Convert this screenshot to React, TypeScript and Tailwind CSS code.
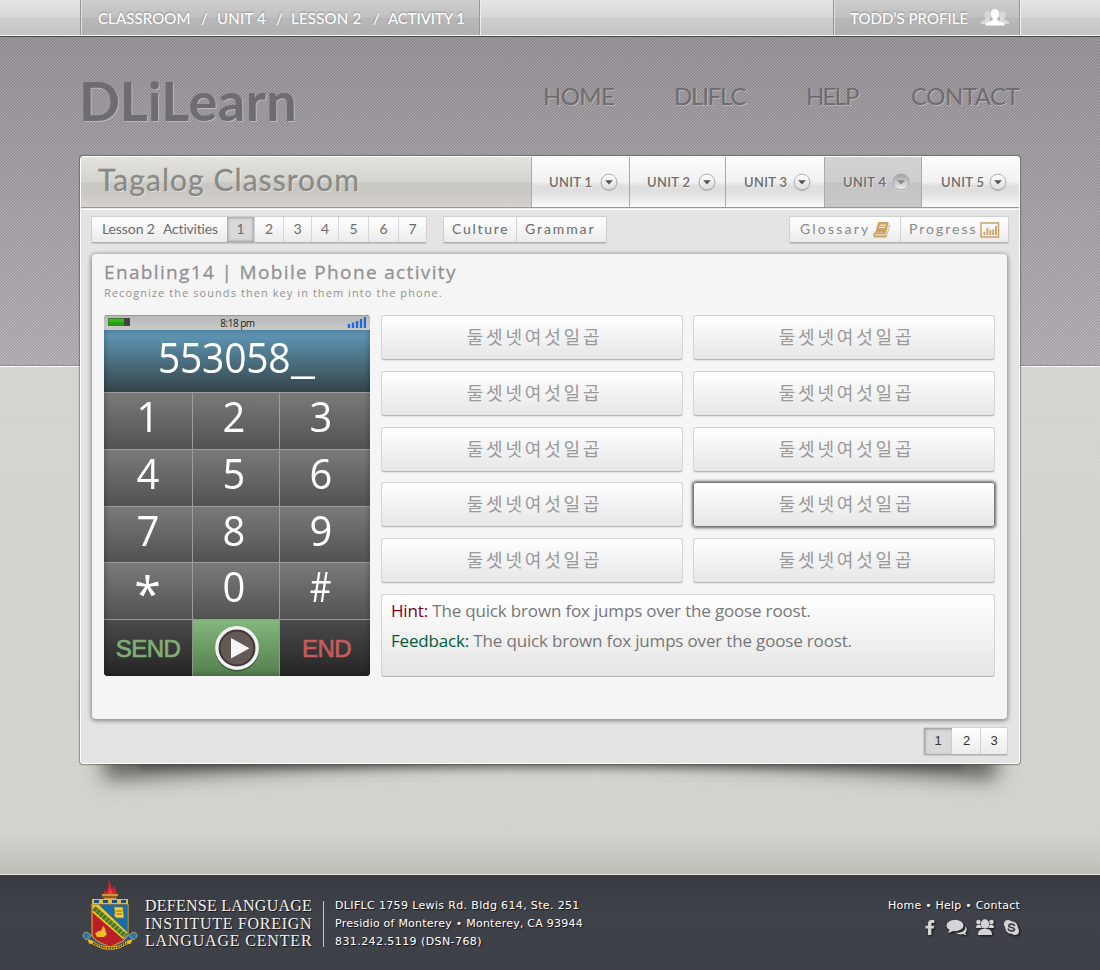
import React from "react";

const futura = "font-['Lato','Liberation_Sans',sans-serif]";
const myriad = "font-['Open_Sans','Noto_Sans',sans-serif]";

const units = [
  { label: "UNIT 1", cell: "w-[98px] pl-[17px]", arrow: "ml-[7px]" },
  { label: "UNIT 2", cell: "w-[96px] pl-[17px]", arrow: "ml-[7px]" },
  { label: "UNIT 3", cell: "w-[99px] pl-[18px]", arrow: "ml-[5px]" },
  { label: "UNIT 4", cell: "w-[97px] pl-[18px]", arrow: "ml-[5px]", active: true },
  { label: "UNIT 5", cell: "w-[98px] pl-[19px]", arrow: "ml-[4px]" },
];

const activities = [
  { n: "2", w: "w-[29px]" },
  { n: "3", w: "w-[28px]" },
  { n: "4", w: "w-[27px]" },
  { n: "5", w: "w-[30px]" },
  { n: "6", w: "w-[30px]" },
  { n: "7", w: "w-[28px]" },
];

const keys = ["1", "2", "3", "4", "5", "6", "7", "8", "9", "*", "0", "#"];

function TopBar() {
  return (
    <div className="h-[37px] border-b border-[#4a484a] bg-[linear-gradient(#e4e4e4_0px,#d8d8d8_17px,#cdcdcd_18px,#c6c6c6_35px,#f4f4f4_35px)]">
      <div className={`mx-[80px] flex h-[35px] justify-between ${futura} text-[15px] font-medium text-white [text-shadow:0_-1px_2px_rgba(0,0,0,0.28)]`}>
        <div className="flex w-[400px] items-center border-x border-[#969696] bg-black/10 pl-[17px] pt-[2px] whitespace-nowrap shadow-[inset_1px_0_0_#ddd,1px_0_0_#eee]">
          <span className="w-[103px] tracking-[0.1px]">CLASSROOM</span>
          <span className="w-[16px]">/</span>
          <span className="w-[59px] tracking-[0.2px]">UNIT 4</span>
          <span className="w-[15px]">/</span>
          <span className="w-[82px] tracking-[0.2px]">LESSON 2</span>
          <span className="w-[15px]">/</span>
          <span className="tracking-[-0.1px]">ACTIVITY 1</span>
        </div>
        <div className="flex w-[187px] items-center border-x border-[#969696] bg-black/10 pl-[16px] pt-[2px] whitespace-nowrap shadow-[inset_1px_0_0_#ddd,1px_0_0_#eee]">
          <span className="w-[130px] tracking-[0px]">TODD’S PROFILE</span>
          <svg className="-mt-[2px] h-[20px] w-[30px]" viewBox="0 0 30 20">
            <g fill="#d9d9d9">
              <ellipse cx="7.5" cy="7" rx="3" ry="4" />
              <path d="M1 16v-2c2-2 5-2 5-4h4v6z" />
              <ellipse cx="22.500" cy="7" rx="3" ry="4" />
              <path d="M29 16v-2c-2-2-5-2-5-4h-4v6z" />
            </g>
            <path fill="#fff" d="M15 1c2.800 0 4.400 2 4.200 5-.1 2-.9 3.600-1.900 4.600v1.500c1.700 1.500 6 2 7.300 4v1.400H5.400v-1.400c1.300-2 5.600-2.500 7.300-4v-1.500c-1-1-1.800-2.600-1.900-4.600C10.600 3 12.200 1 15 1z" />
          </svg>
        </div>
      </div>
    </div>
  );
}

function Masthead() {
  return (
    <div className={`mx-[80px] flex h-[119px] justify-between ${futura} text-[#6f6c6f] [text-shadow:1px_1px_0_rgba(255,255,255,0.3)]`}>
      <div className="-ml-px pt-[31px] text-[54px] leading-[66px] whitespace-nowrap">
        <span className="font-bold tracking-[-0.2px]">DLi</span>
        <span className="font-bold tracking-[0.5px]">Learn</span>
      </div>
      <nav className="flex pt-[44px] text-[24px] leading-[30px] whitespace-nowrap">
        <span className="w-[131px] tracking-[-0.6px]">HOME</span>
        <span className="w-[132px] tracking-[-1.200px]">DLIFLC</span>
        <span className="w-[105px] tracking-[-1.800px]">HELP</span>
        <span className="w-[109px] tracking-[-0.5px]">CONTACT</span>
      </nav>
    </div>
  );
}

function Arrow({ active }: { active?: boolean }) {
  return (
    <svg className="h-[20px] w-[20px] shrink-0" viewBox="0 0 20 20">
      <defs>
        <linearGradient id="knob" x1="0" y1="0" x2="0" y2="1">
          <stop offset="0" stopColor="#fff" />
          <stop offset="1" stopColor="#dcdcdc" />
        </linearGradient>
        <linearGradient id="knobOn" x1="0" y1="0" x2="0" y2="1">
          <stop offset="0" stopColor="#a2a2a2" />
          <stop offset="1" stopColor="#f0f0f0" />
        </linearGradient>
      </defs>
      <circle cx="10" cy="11" r="8.300" fill={active ? "#eee" : "#aaa"} opacity="0.6" />
      <circle cx="10" cy="10" r="7.900" fill={active ? "url(#knobOn)" : "url(#knob)"} stroke={active ? "#a2a2a2" : "#b0b0b0"} strokeWidth="1" />
      <path d="M6.200 8.200h7.600L10 12.400z" fill={active ? "#868686" : "#555"} />
    </svg>
  );
}

function TitleRow() {
  return (
    <div className="flex h-[50px]">
      <h1 className={`w-[450px] pl-[17px] pt-[3px] ${futura} text-[30px] leading-[39px] tracking-[1.050px] whitespace-nowrap text-[#8b8a86] bg-[linear-gradient(#e4e3df_0px,#d3d2cd_25px,#c8c7c1_26px,#cbc9c4_38px,#d6d3cf_50px)] [-webkit-text-stroke:0.3px_#8b8a86] [text-shadow:1px_1px_0_rgba(255,255,255,0.5)]`}>
        Tagalog Classroom
      </h1>
      {units.map((u) => (
        <div
          key={u.label}
          className={`flex items-center border-l border-[#a9a9a9] ${u.cell} ${
            u.active
              ? "bg-[linear-gradient(#d3d3d3_0px,#cdcdcd_25px,#c4c4c4_26px,#c8c8c8_50px)]"
              : "bg-[linear-gradient(#fcfcfc_0px,#f1f1f1_25px,#dedede_29px,#e0e0e0_36px,#fafafa_50px)]"
          }`}
        >
          <span className={`w-[43px] shrink-0 pt-[2px] ${futura} text-[13px] font-semibold tracking-[0.3px] whitespace-nowrap text-[#6d6d6d] [text-shadow:1px_1px_0_#fff8]`}>{u.label}</span>
          <span className={u.arrow}>
            <Arrow active={u.active} />
          </span>
        </div>
      ))}
    </div>
  );
}

const group = "flex rounded-[2px] border border-[#d0d0d0] border-b-[#aeaeae] bg-[linear-gradient(#ffffff,#ebebeb)] shadow-[0_1px_1px_rgba(0,0,0,0.12)] overflow-hidden whitespace-nowrap";

function Toolbar() {
  return (
    <div className={`flex px-[10px] pt-[6px] ${futura} text-[14px] leading-[24px] text-[#6c6c6c]`}>
      <div className={`${group} h-[27px] w-[336px]`}>
        <span className="w-[62px] pl-[10px] tracking-[-0.1px]">Lesson 2</span>
        <span className="w-[73px] pl-[9px] tracking-[-0.2px]">Activities</span>
        <span className="w-[27px] bg-[#d9d9d9] text-center shadow-[inset_0_0_3px_1px_rgba(0,0,0,0.28)]">1</span>
        {activities.map((a) => (
          <span key={a.n} className={`${a.w} border-l border-[#d6d6d6] text-center`}>{a.n}</span>
        ))}
      </div>
      <div className={`${group} ml-[16px] h-[27px] w-[164px]`}>
        <span className="w-[72px] pl-[8px] tracking-[1.700px]">Culture</span>
        <span className="flex-1 border-l border-[#d2d2d2] pl-[8px] tracking-[1.900px]">Grammar</span>
      </div>
      <div className={`${group} ml-auto h-[27px] w-[220px] text-[#8a8a8a]`}>
        <span className="flex w-[110px] pl-[10px] tracking-[2.200px]">
          <span className="w-[73px]">Glossary</span>
          <svg className="mt-[4px] h-[18px] w-[18px]" viewBox="0 0 18 18">
            <path fill="#caa367" d="M5.800 1h8.800c.8 0 1.100.5.900 1.200L13 11.200H2.300L4.900 1.900c.2-.6.400-.9.900-.9z" />
            <path d="M6.800 4.200h6.200M6.100 6.400h6.200" stroke="#fff" strokeWidth="1" />
            <path fill="#caa367" d="M2 11.200h11.200l2.500-7.500 1.600.4-3.500 11.300c-.2.700-.7 1.100-1.400 1.100H2.200C.6 16.500-.1 15 .3 13.200c.3-1.200.9-2 1.700-2z" />
            <path d="M2.200 13.900h11l3-9.600" fill="none" stroke="#f7f3ea" strokeWidth="0.900" />
          </svg>
        </span>
        <span className="flex flex-1 border-l border-[#d2d2d2] pl-[8px] tracking-[2px]">
          <span className="w-[71px]">Progress</span>
          <svg className="mt-[5px] h-[16px] w-[20px]" viewBox="0 0 20 16">
            <rect x="1" y="1" width="17.500" height="14" fill="none" stroke="#caa367" strokeWidth="1.500" />
            <path d="M4.300 13v-3M7.400 13V6M10.400 13V8M13.200 13V7.500M15.900 13V4" stroke="#caa367" strokeWidth="1.800" />
          </svg>
        </span>
      </div>
    </div>
  );
}

function Phone() {
  return (
    <div className="relative h-[361px] w-[266px] overflow-hidden rounded-[4px] bg-[#222]">
      <div className="flex h-[15px] items-center justify-between border-t border-[#999] bg-[linear-gradient(#b8b8b8,#cbcbcb)] pr-[4px] pl-[4px]">
        <svg className="-mt-[2px] h-[8px] w-[22px]" viewBox="0 0 22 8">
          <rect width="22" height="8" fill="#444" />
          <rect x="0.500" y="0.500" width="15.500" height="7" fill="#35b820" />
          <rect x="0.500" y="4" width="15.500" height="3.500" fill="#27a013" />
        </svg>
        <span className={`mr-[2px] ${myriad} text-[10px] tracking-[-0.5px] text-[#222]`}>8:18 pm</span>
        <svg className="-mt-[2px] h-[12px] w-[19px]" viewBox="0 0 19 12">
          <path d="M2 12V8M6 12V6.500M10 12V5M14 12V3M18 12V1" stroke="#2068d8" strokeWidth="2.400" />
        </svg>
      </div>
      <div className={`flex h-[62px] bg-[linear-gradient(#619bbb,#476776_60%,#334249)] pl-[54px] ${myriad} text-[42px] leading-[54px] whitespace-nowrap text-white`}>
        <span className="w-[133px] origin-left scale-x-[0.930] tracking-[-0.3px]">553058</span>
        <span className="origin-left scale-x-[1.300]">_</span>
      </div>
      <div className={`grid grid-cols-[88px_87px_91px] grid-rows-[57px_57px_56px_57px] ${myriad} text-[42px] text-white`}>
        {keys.map((k, i) => (
          <div
            key={k}
            className={`border-t border-[#9d9d9d] bg-[linear-gradient(#7a7a7a,#525252)] text-center leading-[46px] ${
              i % 3 === 0 ? "" : i % 3 === 1 ? "border-l pr-[4px]" : "border-l pr-[8px]"
            }`}
          >
            {k === "*" ? (
              <span className="inline-block scale-115 pt-[6px]">*</span>
            ) : k === "#" ? (
              <span className="inline-block scale-x-[0.8]">#</span>
            ) : (
              <span className="inline-block scale-x-[0.95]">{k}</span>
            )}
          </div>
        ))}
      </div>
      <div className="grid h-[57px] grid-cols-[88px_88px_90px] border-t border-[#999] bg-[linear-gradient(#4a4a4a,#252525)] text-center font-['Liberation_Sans',sans-serif] text-[24px] leading-[58px]">
        <span className="tracking-[-0.5px] text-[#80ae77] [-webkit-text-stroke:0.7px_#80ae77]">SEND</span>
        <span className="flex justify-center border-x border-[#8d9a8a] bg-[linear-gradient(#83b77c,#527c4c)] pl-px">
          <svg className="h-[56px] w-[50px]" viewBox="0 0 50 56">
            <circle cx="25" cy="29.500" r="22" fill="#000" opacity=".35" />
            <circle cx="25" cy="28" r="20" fill="#655958" stroke="#f3f3f3" strokeWidth="3.800" />
            <circle cx="25" cy="28" r="17.500" fill="none" stroke="#352e2e" strokeWidth="2" opacity=".8" />
            <path d="M19 18v20.500l18.500-10.250z" fill="#f5f5f5" />
          </svg>
        </span>
        <span className="pl-[3px] tracking-[-0.5px] text-[#c65c5c] [-webkit-text-stroke:0.7px_#c65c5c]">END</span>
      </div>
      <div className="pointer-events-none absolute inset-x-0 top-[15px] bottom-0 shadow-[inset_0_0_6px_rgba(0,0,0,0.35)]" />
    </div>
  );
}

function Answers() {
  return (
    <div className="w-[614px]">
      <div className="grid h-[268px] grid-cols-[302px_302px] content-between justify-between">
        {Array.from({ length: 10 }, (_, i) => (
          <div
            key={i}
            className={`h-[45px] rounded-[3px] border bg-[linear-gradient(#ffffff,#e6e6e6)] pl-[5px] text-center font-['Noto_Sans_CJK_KR',sans-serif] text-[18px] leading-[40px] font-normal tracking-[2.800px] text-[#999] ${
              i === 7
                ? "border-[#777] shadow-[0_0_3px_1px_#666]"
                : "border-[#d3d3d3] border-b-[#b5b5b5] shadow-[0_1px_1px_rgba(0,0,0,0.08)]"
            }`}
          >
            둘셋넷여섯일곱
          </div>
        ))}
      </div>
      <div className={`mt-[11px] h-[83px] rounded-[3px] border border-[#d3d3d3] border-b-[#b5b5b5] bg-[linear-gradient(#ffffff,#e5e5e5)] pt-[1px] pl-[9px] ${myriad} text-[17px] leading-[30px] tracking-[-0.170px] text-[#777]`}>
        <p><span className="text-[#7d0026]">Hint:</span> The quick brown fox jumps over the goose roost.</p>
        <p><span className="text-[#005b38]">Feedback:</span> The quick brown fox jumps over the goose roost.</p>
      </div>
    </div>
  );
}

function Card() {
  return (
    <div className="relative isolate mx-[80px] h-[608px]">
      <div className="absolute bottom-[15px] left-[20px] -z-10 h-[100px] w-[480px] rotate-[-3.500deg] shadow-[0_16px_20px_rgba(60,60,58,0.75)]" />
      <div className="absolute right-[20px] bottom-[15px] -z-10 h-[100px] w-[480px] rotate-[3.500deg] shadow-[0_16px_20px_rgba(60,60,58,0.75)]" />
      <div className="absolute inset-x-[60px] bottom-0 -z-10 h-[20px] shadow-[0_2px_8px_2px_rgba(60,60,58,0.6)]" />
      <div className="h-[608px] rounded-[3px] border border-white bg-[#e3e3e3] bg-[repeating-linear-gradient(#e4e4e4_0px,#e4e4e4_3px,#e1e1e1_4px)] shadow-[0_0_1px_1px_rgba(70,70,70,0.5)]">
        <TitleRow />
        <div className="h-[3px] border-t border-[#989898] border-b border-b-white bg-[#e8e8e8]" />
        <Toolbar />
        <section className="mx-[11px] mt-[11px] h-[465px] w-[915px] rounded-[4px] bg-[#f5f5f5] px-[12px] shadow-[0_1px_4px_1px_rgba(0,0,0,0.4)]">
          <h2 className={`pt-[5px] ${myriad} text-[19px] leading-[26px] font-medium tracking-[1.350px] whitespace-nowrap text-[#929292] [-webkit-text-stroke:0.3px_#929292]`}>Enabling14 | Mobile Phone activity</h2>
          <p className={`pt-px ${myriad} text-[11px] leading-[14px] tracking-[1.070px] whitespace-nowrap text-[#929292]`}>Recognize the sounds then key in them into the phone.</p>
          <div className="mt-[15px] flex gap-[11px]">
            <Phone />
            <Answers />
          </div>
        </section>
        <div className="mt-[8px] flex justify-end pr-[11px]">
          <div className={`${group} h-[28px] w-[85px] text-center font-['Liberation_Sans',sans-serif] text-[13px] leading-[26px] text-[#333]`}>
            <span className="w-[28px] bg-[#d9d9d9] shadow-[inset_1px_1px_3px_rgba(0,0,0,0.35)]">1</span>
            <span className="w-[28px] pl-px">2</span>
            <span className="flex-1 border-l border-[#d2d2d2]">3</span>
          </div>
        </div>
      </div>
    </div>
  );
}

function Crest() {
  return (
    <svg className="h-[74px] w-[56px]" viewBox="0 0 56 74">
      <path d="M20 19c0-4 3-4 2-8 2 1 2 2 2 3 1-4 4-6 2-13 4 3 3 7 4 10 1-2 1-3 3-4-1 4 3 5 2 12z" fill="#d8232e" />
      <path d="M25 18c0-4 3-5 3-9 2 4 3 5 2 9z" fill="#f04040" />
      <path d="M19 15h18l-3 5v6H22v-6z" fill="#8a5a24" />
      <path d="M20 16h16M22 20h12" stroke="#e2a94b" strokeWidth="1.500" />
      <path d="M10 20h36v5H10z" transform="translate(0 0)" fill="#e7bd2d" />
      <path d="M12 22.500h5M21 22.500h5M30 22.500h5M39 22.500h5" stroke="#194f80" strokeWidth="3.200" />
      <path d="M9 54C3 52 1 57 3 61c4-1 7 1 8 5 8 6 26 6 34 0 1-4 4-6 8-5 2-4 0-9-6-7z" fill="#1d5e96" stroke="#0b2036" strokeWidth=".7" />
      <path d="M10 25h36v31c-3 7-10 8-18 12C20 64 13 63 10 56z" fill="#ba1f28" stroke="#e3b62d" strokeWidth="1" />
      <path d="M10.500 25.500h35v30c-.4 1-1 2-2 3z" fill="#176ea6" />
      <path d="M10.500 25.500h6l29 28c-1 3-2 5-4 7l-31-27z" fill="#f0c31d" />
      <path d="M12 29l31.500 28" stroke="#3e7837" strokeWidth="5" strokeDasharray="3.500 0.600" />
      <path d="M32 28h9v2l1 9h-8l-2-3 1-2z" fill="#f4cb38" stroke="#8a661a" strokeWidth=".6" />
      <path d="M34 32h6M34.500 35h5.500" stroke="#7c5a12" strokeWidth=".9" />
      <path d="M13 54c3 0 3-3 6-2l2-5c3 2 2 6 4 8l-3 3h-7z" fill="#f0bd27" />
      <path d="M5 60c8 0 8 7 23 7s15-7 23-7l-2 5c-7 0-8 6-21 6S14 65 7 65z" fill="#e8b830" stroke="#57400c" strokeWidth=".6" />
      <path d="M11 64c5 2 8 5 17 5s12-3 17-5" stroke="#3c2d0a" strokeWidth="1.600" strokeDasharray="1.500 1" fill="none" />
      <path d="M2 54c3-2 6 0 7 3l-5 4c-3-2-4-5-2-7zM54 54c-3-2-6 0-7 3l5 4c3-2 4-5 2-7z" fill="#2f75ab" stroke="#e0bb42" strokeWidth=".7" />
    </svg>
  );
}

function Footer() {
  return (
    <footer className="h-[96px] border-t border-[#e4e4e0] bg-[#3e4048] bg-[linear-gradient(#383a42,#40424a_40%,#3e4048)] px-[80px] text-white">
      <div className="flex">
        <div className="pt-[4px] pl-[2px]"><Crest /></div>
        <div className="ml-[7px] w-[178px] pt-[22px] font-['Liberation_Serif',serif] text-[16px] leading-[17.500px] whitespace-nowrap text-[#f2f2f2] [text-shadow:1px_1px_1px_#111]">
          <div className="tracking-[0.250px]">DEFENSE LANGUAGE</div>
          <div className="tracking-[0.720px]">INSTITUTE FOREIGN</div>
          <div className="tracking-[0.820px]">LANGUAGE CENTER</div>
        </div>
        <div className="mt-[26px] h-[46px] w-px bg-[#c9c9cb]" />
        <div className="ml-[11px] pt-[22px] font-['DejaVu_Sans',sans-serif] text-[11px] leading-[18px] whitespace-nowrap [text-shadow:1px_1px_1px_#111]">
          <div className="tracking-[0.350px]">DLIFLC 1759 Lewis Rd. Bldg 614, Ste. 251</div>
          <div className="tracking-[0.230px]">Presidio of Monterey • Monterey, CA 93944</div>
          <div className="tracking-[0.420px]">831.242.5119 (DSN-768)</div>
        </div>
        <div className="ml-auto flex flex-col items-end pt-[22px] font-['DejaVu_Sans',sans-serif] text-[11px] leading-[18px] whitespace-nowrap [text-shadow:1px_1px_1px_#111]">
          <div className="tracking-[0.220px]">Home • Help • Contact</div>
          <svg className="mt-[3px] h-[20px] w-[98px] drop-shadow-[1px_1px_1px_#111]" viewBox="0 0 98 20">
            <g fill="#d4d4d6">
              <path d="M6 17V10.500H3.500V7.700H6V5.500C6 3 7.500 2 9.500 2h2.800v3h-1.700c-.8 0-1.200.3-1.200 1.100v1.600h2.800l-.4 2.800H9.400V17z" />
              <ellipse cx="33" cy="7.500" rx="8.500" ry="5.800" />
              <path d="M28 11l-2 4 5.500-2z" />
              <path d="M42.500 8c2.500 3-1 7-8.500 6.800 2.500 2.200 5.500 1.600 7 1.200 1 .8 2.300 1.300 3.600 1-1-.7-1.300-1.500-1.300-2.300 2-1.900 2-5-.8-6.700z" />
              <ellipse cx="63" cy="6" rx="4.200" ry="4.700" />
              <path d="M56 17c0-4 2-5.500 4.500-6h5c2.500.5 4.500 2 4.500 6z" />
              <circle cx="56.500" cy="4" r="2.300" />
              <circle cx="69.500" cy="4" r="2.300" />
              <path d="M54 10c0-2.500 1-3.500 3-3.500 1.600 0 2 .7 2.700 3.500zM66.300 10c.7-2.800 1.100-3.500 2.700-3.500 2 0 3 1 3 3.500z" />
              <circle cx="89.500" cy="9.500" r="6.300" />
              <circle cx="86" cy="6" r="4" />
              <circle cx="93" cy="13" r="4" />
            </g>
            <path d="M92.500 7.500c-.5-1.600-5.400-2.100-5.800.1-.3 2.300 6 1.500 5.800 3.800-.2 2.200-5.600 1.900-6.200-.3" fill="none" stroke="#3e4048" strokeWidth="1.700" strokeLinecap="round" />
          </svg>
        </div>
      </div>
    </footer>
  );
}

export default function App() {
  return (
    <div className="h-[970px] w-[1100px] overflow-hidden">
      <TopBar />
      <div className="h-[837px] bg-[linear-gradient(#8e8c8e_0px,#8e8c8e_1px,#fff_1px,#fff_2px,transparent_2px),repeating-linear-gradient(#0000_0px,#0000_3px,rgba(90,90,70,0.06)_4px),linear-gradient(#d6d5cf_0px,#d4d3cd_468px,#bfbeb8_508px),linear-gradient(135deg,rgba(50,40,50,0.2)_25%,transparent_25%,transparent_50%,rgba(50,40,50,0.2)_50%,rgba(50,40,50,0.2)_75%,transparent_75%),linear-gradient(#a4a0a4,#c2bfc3)] [background-repeat:no-repeat,no-repeat,no-repeat,repeat,no-repeat] [background-position:0_328px,0_329px,0_329px,0_0,0_0] [background-size:100%_3px,100%_508px,100%_508px,3px_3px,100%_329px]">
        <Masthead />
        <Card />
      </div>
      <Footer />
    </div>
  );
}
